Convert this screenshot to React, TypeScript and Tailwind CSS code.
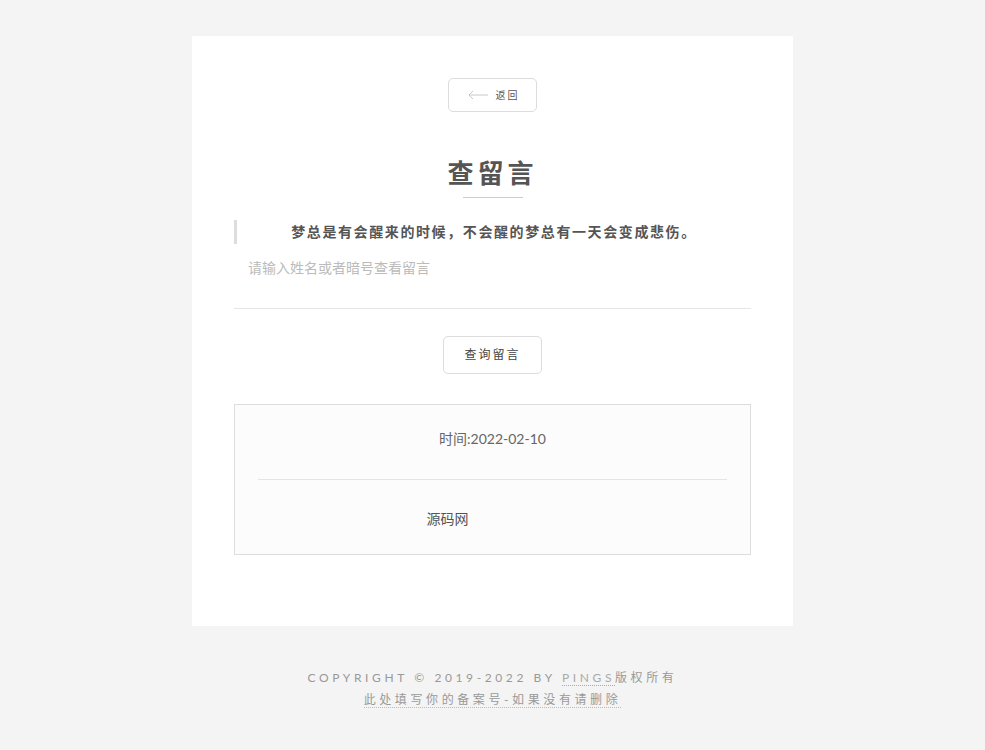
import React, { useState } from 'react';

const cjk = '"Lato", "Noto Sans CJK SC", sans-serif';

const App: React.FC = () => {
  const [keyword, setKeyword] = useState('');

  return (
    <div className="min-h-[750px] bg-[#f4f4f4] pt-[36px]" style={{ fontFamily: cjk }}>
      <div className="mx-auto w-[601px] bg-white px-[42px] pt-[42px] pb-[71px]">
        {/* back link */}
        <div className="flex justify-center">
          <button className="flex h-[34px] w-[89px] items-center justify-center gap-[8px] rounded-[5px] border border-[#dcdcdc] pl-[2px] text-[10px] tracking-[2px] text-[#555]">
            <svg width="20" height="10" viewBox="0 0 20 10" fill="none" stroke="#c8c8c8" strokeWidth="1">
              <path d="M20 5H1M5 1L1 5l4 4" />
            </svg>
            <span>返回</span>
          </button>
        </div>

        <h1 className="mt-[44px] text-center text-[26px] font-bold leading-[34px] tracking-[4px] text-[#555]">查留言</h1>
        <div className="mx-auto mt-[7px] h-px w-[60px] bg-[#ccc]" />

        <blockquote className="mt-[22px] border-l-[3px] border-[#ddd] py-[3px] text-center text-[14px] font-bold leading-[18px] tracking-[1.6px] text-[#555]">
          梦总是有会醒来的时候，不会醒的梦总有一天会变成悲伤。
        </blockquote>

        <input
          value={keyword}
          onChange={(e) => setKeyword(e.target.value)}
          placeholder="请输入姓名或者暗号查看留言"
          className="mt-[9px] block h-[56px] w-full border-b border-[#e5e5e5] px-[14px] pb-[26px] text-[14px] text-[#555] outline-none placeholder:text-[#bbb]"
        />

        <div className="mt-[27px] flex justify-center">
          <button className="h-[38px] w-[99px] rounded-[5px] border border-[#dcdcdc] text-[12px] tracking-[2px] text-[#444]">
            查询留言
          </button>
        </div>

        {/* message result */}
        <div className="mt-[30px] border border-[#ddd] bg-[#fcfcfc] px-[23px]">
          <p className="pt-[24px] text-center text-[14px] leading-[20px] text-[#666]">时间:2022-02-10</p>
          <div className="mt-[30px] h-px bg-[#e5e5e5]" />
          <p className="pt-[29px] pb-[25px] pr-[90px] text-center text-[14px] leading-[20px] text-[#555]">源码网</p>
        </div>
      </div>

      <footer className="pt-[41px] text-center text-[12px] leading-[22px] tracking-[3.6px] text-[#999]">
        <p>
          COPYRIGHT © 2019-2022 BY{' '}
          <span className="border-b border-dotted border-[#aaa] text-[#aaa]">PINGS</span>版权所有
        </p>
        <p>
          <span className="border-b border-dotted border-[#bbb]">此处填写你的备案号-如果没有请删除</span>
        </p>
      </footer>
    </div>
  );
};

export default App;
